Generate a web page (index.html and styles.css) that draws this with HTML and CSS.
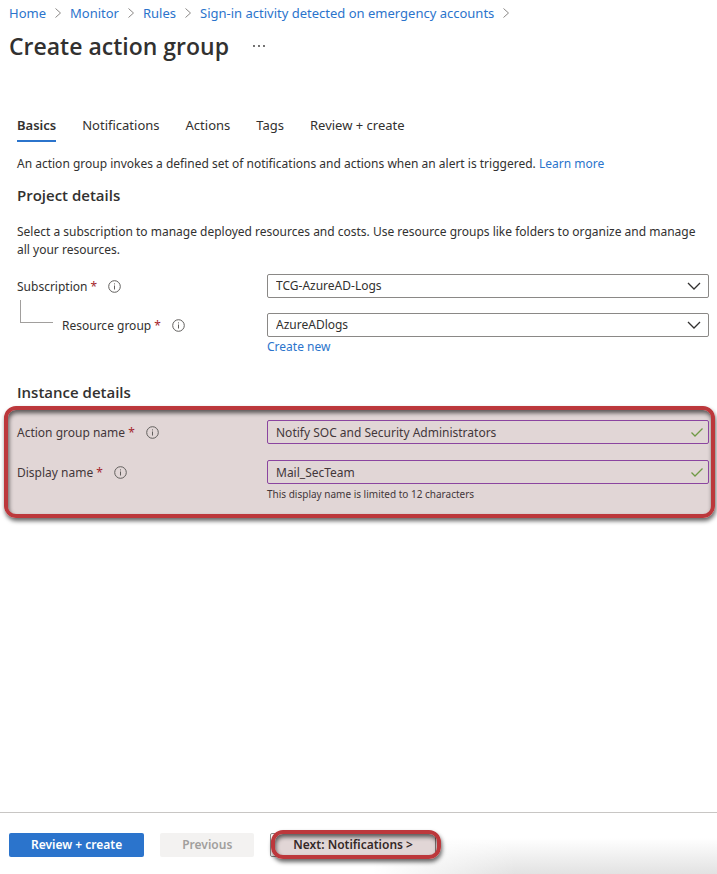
FILE: index.html
```html
<!DOCTYPE html>
<html lang="en">
<head>
    <meta charset="UTF-8">
    <meta name="viewport" content="width=device-width, initial-scale=1.0">
    <title>Create action group</title>
    <link rel="stylesheet" href="styles.css">
</head>
<body>
    <header class="page-header">
        <nav class="breadcrumb" aria-label="Breadcrumb">
            <a href="#">Home</a>
            <svg class="crumb-arrow" viewBox="0 0 6 10"><path d="M0.5 0.5 L5.5 5 L0.5 9.5"/></svg>
            <a href="#">Monitor</a>
            <svg class="crumb-arrow" viewBox="0 0 6 10"><path d="M0.5 0.5 L5.5 5 L0.5 9.5"/></svg>
            <a href="#">Rules</a>
            <svg class="crumb-arrow" viewBox="0 0 6 10"><path d="M0.5 0.5 L5.5 5 L0.5 9.5"/></svg>
            <a href="#">Sign-in activity detected on emergency accounts</a>
            <svg class="crumb-arrow" viewBox="0 0 6 10"><path d="M0.5 0.5 L5.5 5 L0.5 9.5"/></svg>
        </nav>
        <div class="title-row">
            <h1>Create action group</h1>
            <button type="button" class="more" aria-label="More">
                <svg viewBox="0 0 12 2"><circle cx="1" cy="1" r="0.9"/><circle cx="6" cy="1" r="0.9"/><circle cx="11" cy="1" r="0.9"/></svg>
            </button>
        </div>
    </header>

    <nav class="tabs">
        <a href="#" class="tab active">Basics</a>
        <a href="#" class="tab">Notifications</a>
        <a href="#" class="tab">Actions</a>
        <a href="#" class="tab">Tags</a>
        <a href="#" class="tab">Review + create</a>
    </nav>

    <main>
        <p class="intro">An action group invokes a defined set of notifications and actions when an alert is triggered. <a href="#">Learn more</a></p>

        <h2>Project details</h2>
        <p class="description">Select a subscription to manage deployed resources and costs. Use resource groups like folders to organize and manage all your resources.</p>

        <div class="field">
            <div class="field-label">
                <label for="subscription">Subscription <span class="required">*</span></label>
                <svg class="info" viewBox="0 0 13 13"><circle cx="6.5" cy="6.5" r="5.8"/><path d="M6.5 5.5 V9.5 M6.5 3.4 V4.4"/></svg>
            </div>
            <div class="control">
                <select id="subscription">
                    <option>TCG-AzureAD-Logs</option>
                </select>
                <svg class="chevron" viewBox="0 0 14 8"><path d="M1 1 L7 7 L13 1"/></svg>
            </div>
        </div>

        <div class="field child-field">
            <div class="field-label">
                <span class="branch"></span>
                <label for="resourceGroup">Resource group <span class="required">*</span></label>
                <svg class="info" viewBox="0 0 13 13"><circle cx="6.5" cy="6.5" r="5.8"/><path d="M6.5 5.5 V9.5 M6.5 3.4 V4.4"/></svg>
            </div>
            <div class="control">
                <select id="resourceGroup">
                    <option>AzureADlogs</option>
                </select>
                <svg class="chevron" viewBox="0 0 14 8"><path d="M1 1 L7 7 L13 1"/></svg>
            </div>
            <a href="#" class="below">Create new</a>
        </div>

        <h2 class="instance-title">Instance details</h2>
    </main>

    <section class="instance">
        <div class="field">
            <div class="field-label">
                <label for="groupName">Action group name <span class="required">*</span></label>
                <svg class="info" viewBox="0 0 13 13"><circle cx="6.5" cy="6.5" r="5.8"/><path d="M6.5 5.5 V9.5 M6.5 3.4 V4.4"/></svg>
            </div>
            <div class="control">
                <input type="text" id="groupName" value="Notify SOC and Security Administrators">
                <svg class="check" viewBox="0 0 12 9"><path d="M0.5 4.5 L4 8 L11.5 0.5"/></svg>
            </div>
        </div>
        <div class="field">
            <div class="field-label">
                <label for="displayName">Display name <span class="required">*</span></label>
                <svg class="info" viewBox="0 0 13 13"><circle cx="6.5" cy="6.5" r="5.8"/><path d="M6.5 5.5 V9.5 M6.5 3.4 V4.4"/></svg>
            </div>
            <div class="control">
                <input type="text" id="displayName" value="Mail_SecTeam">
                <svg class="check" viewBox="0 0 12 9"><path d="M0.5 4.5 L4 8 L11.5 0.5"/></svg>
            </div>
            <p class="below hint">This display name is limited to 12 characters</p>
        </div>
    </section>

    <footer class="actions">
        <button type="button" class="btn primary">Review + create</button>
        <button type="button" class="btn previous" disabled>Previous</button>
        <button type="button" class="btn next">Next: Notifications &gt;</button>
    </footer>
</body>
</html>
```

FILE: styles.css
```css
* {
    box-sizing: border-box;
}
body {
    display: flex;
    flex-direction: column;
    min-height: 100vh;
    margin: 0;
    background-color: #fff;
    color: #323130;
    font-family: "Noto Sans", "Open Sans", sans-serif;
    font-size: 12px;
    line-height: 18px;
}
h1, h2, p {
    margin: 0;
}
h1, h2 {
    font-family: "Open Sans", "Noto Sans", sans-serif;
    font-weight: 600;
}
a {
    color: #2b74cc;
    text-decoration: none;
}
svg {
    flex: none;
    fill: none;
}

/* header */
.page-header {
    padding: 3px 9px 0;
}
.breadcrumb {
    display: flex;
    align-items: center;
    gap: 9px;
    font-size: 13px;
    line-height: 20px;
}
.crumb-arrow {
    width: 6px;
    height: 10px;
    stroke: #8a8886;
}
.title-row {
    display: flex;
    align-items: center;
    gap: 24px;
    margin-top: 7px;
}
h1 {
    font-size: 23px;
    line-height: 32px;
}
.more {
    display: flex;
    padding: 0;
    border: none;
    background: none;
}
.more svg {
    width: 12px;
    height: 2px;
    fill: #323130;
}

/* tabs */
.tabs {
    display: flex;
    gap: 26px;
    padding: 53px 17px 0;
    font-size: 13px;
    line-height: 20px;
}
.tab {
    padding-bottom: 5px;
    border-bottom: 2px solid transparent;
    color: #323130;
}
.tab.active {
    border-color: #2b74cc;
    font-weight: 600;
}

/* form */
main {
    padding: 13px 8px 0 17px;
}
h2 {
    margin-top: 11px;
    font-size: 15px;
    line-height: 22px;
}
.description {
    margin: 17px 0 15px;
}
.field {
    display: grid;
    grid-template-columns: 250px 1fr;
}
.field-label {
    display: flex;
    align-items: center;
    gap: 11px;
    padding-top: 1px;
}
.required {
    color: #a4262c;
}
.info {
    width: 13px;
    height: 13px;
    stroke: #605e5c;
}
.control {
    display: grid;
    align-items: center;
}
.control > * {
    grid-area: 1 / 1;
}
select,
input {
    width: 100%;
    height: 24px;
    padding: 0 30px 0 8px;
    border: 1px solid #8a8886;
    border-radius: 2px;
    appearance: none;
    background-color: #fff;
    color: #323130;
    font: inherit;
}
input {
    border-color: #8b45a0;
    background-color: transparent;
    color: #43373a;
}
.chevron {
    justify-self: end;
    width: 14px;
    height: 8px;
    margin-right: 8px;
    stroke: #323130;
    stroke-width: 1.3;
    pointer-events: none;
}
.check {
    justify-self: end;
    width: 12px;
    height: 9px;
    margin-right: 6px;
    stroke: #6f9a45;
    stroke-width: 1.3;
}
.below {
    grid-column: 2;
    margin-top: 1px;
}
.hint {
    font-size: 10px;
}
.child-field {
    margin-top: 15px;
}
.branch {
    align-self: start;
    width: 33px;
    height: 23px;
    margin: -14px -2px 0 3px;
    border: solid #a19f9d;
    border-width: 0 0 1px 1px;
}
.instance-title {
    margin-top: 25px;
}

/* red marker around the parts to fill in */
.instance,
.next::after {
    border: 4px solid #bc383c;
    border-radius: 12px;
    background-color: rgba(70, 0, 0, 0.16);
    box-shadow: 1px 3px 4px rgba(0, 0, 0, 0.6), inset 1px 3px 4px rgba(0, 0, 0, 0.6);
}
.instance {
    display: grid;
    gap: 16px;
    margin: 3px 2px 16px 4px;
    padding: 10px 2px 11px 9px;
    color: #43373a;
}

/* footer */
.actions {
    display: flex;
    align-items: center;
    gap: 16px;
    margin-top: auto;
    padding: 20px 9px 17px;
    border-top: 1px solid #c8c6c4;
    background: linear-gradient(to right, #fff 52%, transparent 72%), linear-gradient(to top, #e2e2e2, #fff 36px);
}
.btn {
    height: 24px;
    padding: 0 22px;
    border: none;
    border-radius: 2px;
    font: inherit;
    font-weight: 600;
}
.primary {
    background-color: #2b74cc;
    color: #fff;
}
.previous {
    background-color: #f3f2f1;
    color: #a19f9d;
}
.next {
    position: relative;
    border: 1px solid #8a8886;
    background-color: #fff;
    color: #323130;
}
.next::after {
    content: "";
    position: absolute;
    inset: -4px -6px -3px 0;
}
```
